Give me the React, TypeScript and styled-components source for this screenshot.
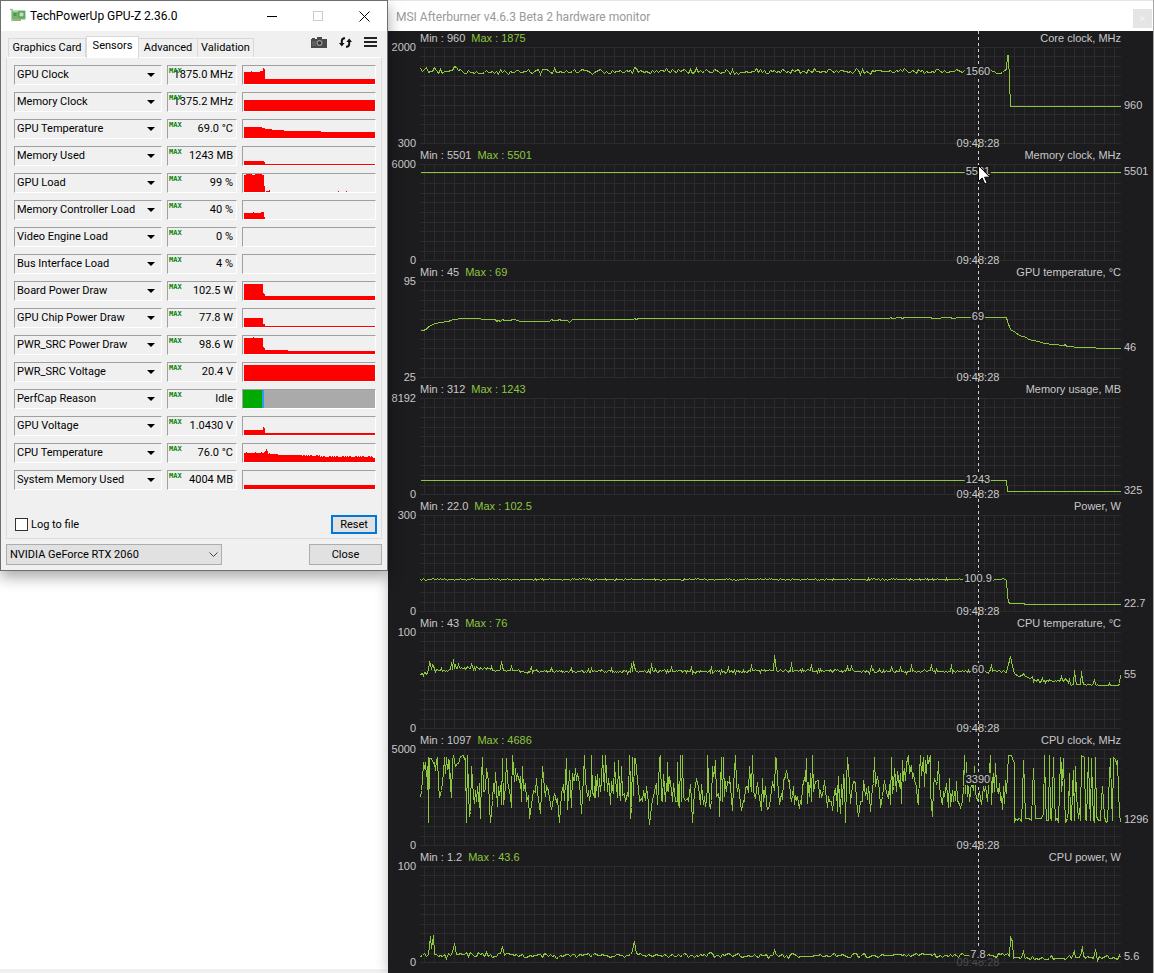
import React from 'react';
import styled, { createGlobalStyle } from 'styled-components';

const GlobalStyle = createGlobalStyle`
  * { box-sizing: border-box; }
  html, body { margin: 0; background: #fff; }
  body { font-family: 'Liberation Sans', Arial, sans-serif; font-size: 11px; line-height: 12px; color: #000; }
  button, select, input { font: inherit; color: inherit; margin: 0; }
`;

const Desktop = styled.div`
  display: flex;
  align-items: stretch;
  min-height: 100vh;
  background: #fff;
`;

const LeftColumn = styled.div`
  display: flex;
  flex: 0 0 388px;
  flex-direction: column;
  justify-content: space-between;
`;

const BottomStrip = styled.div`
  height: 4px;
  background: #f0f0f0;
`;

/* ---------- GPU-Z window ---------- */

const GpuzWindow = styled.section`
  position: relative;
  z-index: 2;
  border: 1px solid #6e6e6e;
  background: #f0f0f0;
  box-shadow: 0 6px 14px rgba(0, 0, 0, 0.35);
  font-family: Roboto, 'Liberation Sans', sans-serif;
`;

const TitleBar = styled.header`
  display: flex;
  align-items: center;
  height: 30px;
  padding: 0 0 0 9px;
  background: #fff;
`;

const WindowTitle = styled.h1<{ $muted?: boolean }>`
  flex: 1;
  margin: 0;
  font: 400 12px/16px Roboto, 'Open Sans', sans-serif;
  color: ${(p) => (p.$muted ? '#999' : '#000')};
`;

const CardIcon = styled.svg`
  width: 16px;
  height: 16px;
  margin-right: 4px;
`;

const CaptionButton = styled.button`
  display: flex;
  align-items: center;
  justify-content: center;
  width: 46px;
  height: 30px;
  padding: 0;
  border: 0;
  background: none;
`;

const TabBar = styled.div`
  display: flex;
  align-items: flex-end;
  height: 26px;
  padding: 0 10px 0 7px;
`;

const Tab = styled.button<{ $active?: boolean; $width: number }>`
  position: relative;
  width: ${(p) => p.$width}px;
  height: ${(p) => (p.$active ? 22 : 19)}px;
  margin-bottom: ${(p) => (p.$active ? -1 : 0)}px;
  padding: 0 0 ${(p) => (p.$active ? 3 : 0)}px;
  border: 1px solid #d9d9d9;
  border-bottom: 0;
  border-left-width: ${(p) => (p.$active ? 1 : 0)}px;
  background: ${(p) => (p.$active ? '#fff' : '#f0f0f0')};
  white-space: nowrap;
  &:first-child { border-left-width: 1px; }
`;

const Tools = styled.div`
  display: flex;
  flex: 1;
  align-items: center;
  justify-content: flex-end;
  gap: 12px;
  height: 26px;
  padding-bottom: 4px;
`;

const ToolButton = styled.button`
  display: flex;
  padding: 0;
  border: 0;
  background: none;
`;

const SensorPanel = styled.div`
  display: flex;
  flex-direction: column;
  height: 482px;
  margin: 0 5px;
  padding: 7px 4px 4px 7px;
  border: 1px solid #dcdcdc;
  border-top-color: #fff;
`;

const SensorList = styled.ul`
  display: grid;
  gap: 7px;
  margin: 0;
  padding: 0;
  list-style: none;
`;

const SensorRow = styled.li`
  display: grid;
  grid-template-columns: 148px 70px 134px;
  gap: 5px;
  height: 20px;
`;

const Sunken = styled.div`
  position: relative;
  border: 1px solid #fff;
  border-top-color: #a0a0a0;
  border-left-color: #a0a0a0;
`;

const SensorSelect = styled.select`
  appearance: none;
  width: 100%;
  height: 18px;
  padding: 0 0 0 2px;
  border: 0;
  background: none;
`;

const SelectArrow = styled.svg<{ $right: number }>`
  position: absolute;
  right: ${(p) => p.$right}px;
  top: 50%;
  transform: translateY(-50%);
  pointer-events: none;
`;

const Value = styled.output`
  display: block;
  padding-right: 3px;
  line-height: 18px;
  text-align: right;
`;

const MaxTag = styled.span`
  position: absolute;
  left: 1px;
  top: 2px;
  font: 700 7px/7px 'DejaVu Sans Mono', monospace;
  color: #008000;
`;

const History = styled.svg`
  display: block;
  width: 132px;
  height: 18px;
`;

const PanelFooter = styled.div`
  display: flex;
  align-items: center;
  justify-content: space-between;
  margin-top: auto;
`;

const CheckLabel = styled.label`
  display: flex;
  align-items: center;
  gap: 3px;
  padding-left: 1px;
`;

const Checkbox = styled.input`
  appearance: none;
  width: 13px;
  height: 13px;
  border: 1px solid #333;
  background: #fff;
`;

const PushButton = styled.button<{ $focus?: boolean; $width: number }>`
  width: ${(p) => p.$width}px;
  height: ${(p) => (p.$focus ? 19 : 21)}px;
  padding: 0;
  border: ${(p) => (p.$focus ? '2px solid #0078d7' : '1px solid #adadad')};
  background: #e1e1e1;
`;

const WindowFooter = styled.footer`
  display: flex;
  justify-content: space-between;
  padding: 5px;
`;

const CardPicker = styled.div`
  position: relative;
  width: 216px;
`;

const CardSelect = styled.select`
  appearance: none;
  width: 100%;
  height: 21px;
  padding: 0 0 0 3px;
  border: 1px solid #adadad;
  border-radius: 0;
  background: #e1e1e1;
`;

/* Each history is a list of [x, top] steps drawn down to the bottom of an 18px strip. */
type Step = [number, number];

const cpuTempSteps: Step[] = [];
for (let x = 1; x < 132; x++) {
  let top = 9;
  if (x > 24) top = 10;
  if (x > 34) top = 11;
  if (x > 58) top = 12;
  if (x > 76) top = 13;
  if (x === 3 || x === 12 || x === 18 || x === 21 || x === 26) top -= 1;
  if (x === 22 || x === 24) top = 7;
  if (x === 23) top = 5;
  if (x > 55 && (x * x * 7 + x) % 13 < 5) top -= 1;
  if (x === 130 || x === 131) top = 14;
  cpuTempSteps.push([x, top]);
}

interface Sensor {
  name: string;
  value: string;
  steps: Step[];
  perfCap?: boolean;
}

const sensors: Sensor[] = [
  { name: 'GPU Clock', value: '1875.0 MHz', steps: [[1, 6], [8, 5], [9, 6], [17, 5], [20, 2], [21, 3], [22, 13]] },
  { name: 'Memory Clock', value: '1375.2 MHz', steps: [[1, 7]] },
  { name: 'GPU Temperature', value: '69.0 °C', steps: [[1, 7], [19, 8], [22, 9], [29, 10], [41, 11], [78, 12]] },
  { name: 'Memory Used', value: '1243 MB', steps: [[1, 14], [21, 15], [22, 17]] },
  { name: 'GPU Load', value: '99 %', steps: [[1, 1], [3, 0], [9, 1], [12, 0], [19, 1], [21, 12], [22, 18], [23, 17], [26, 16], [27, 18], [95, 17], [96, 18], [103, 17], [104, 18]] },
  { name: 'Memory Controller Load', value: '40 %', steps: [[1, 12], [10, 11], [11, 12], [18, 11], [21, 16], [22, 18]] },
  { name: 'Video Engine Load', value: '0 %', steps: [] },
  { name: 'Bus Interface Load', value: '4 %', steps: [] },
  { name: 'Board Power Draw', value: '102.5 W', steps: [[1, 2], [20, 11], [21, 12], [22, 14]] },
  { name: 'GPU Chip Power Draw', value: '77.8 W', steps: [[1, 9], [20, 15], [22, 17]] },
  { name: 'PWR_SRC Power Draw', value: '98.6 W', steps: [[1, 2], [10, 1], [11, 2], [20, 11], [21, 12], [22, 14], [45, 15]] },
  { name: 'PWR_SRC Voltage', value: '20.4 V', steps: [[1, 2]] },
  { name: 'PerfCap Reason', value: 'Idle', steps: [], perfCap: true },
  { name: 'GPU Voltage', value: '1.0430 V', steps: [[1, 13], [20, 10], [21, 11], [22, 16]] },
  { name: 'CPU Temperature', value: '76.0 °C', steps: cpuTempSteps },
  { name: 'System Memory Used', value: '4004 MB', steps: [[1, 14]] },
];

const stepPath = (steps: Step[]) => {
  if (!steps.length) return '';
  return `M${steps[0][0]} 18` + steps.map(([x, y]) => `H${x}V${y}`).join('') + 'H132V18Z';
};

/* ---------- Hardware monitor ---------- */

const Monitor = styled.section`
  position: relative;
  z-index: 1;
  flex: 1;
  min-width: 0;
  border-right: 1px solid #a6a6a6;
  background: #1c1c1e;
  box-shadow: 0 0 12px rgba(0, 0, 0, 0.25);
`;

const MonitorTitle = styled.header`
  display: flex;
  align-items: center;
  height: 31px;
  padding: 1px 1px 0 8px;
  border-top: 1px solid #e6e6e6;
  background: #fff;
`;

const GhostClose = styled.button`
  display: flex;
  align-items: center;
  justify-content: center;
  width: 19px;
  height: 19px;
  margin-top: 3px;
  padding: 0;
  border: 0;
  background: #e5e5e5;
`;

const Charts = styled.div`
  position: relative;
  height: 942px;
  overflow: hidden;
  color: #c8c8c8;
`;

const ChartRow = styled.article`
  display: grid;
  grid-template-columns: 32px minmax(0, 1fr) 32px;
  height: 117px;
`;

const Scale = styled.div`
  display: flex;
  flex-direction: column;
  justify-content: space-between;
  height: 108px;
  margin-top: 10px;
  padding-right: 4px;
  text-align: right;
`;

const ChartBody = styled.div`
  padding-top: 1px;
`;

const ChartHeader = styled.div`
  display: flex;
  gap: 6px;
  height: 15px;
`;

const MaxText = styled.span`
  color: #8cc63f;
`;

const ChartTitle = styled.h2`
  margin: 0 0 0 auto;
  font: inherit;
`;

const Plot = styled.div`
  position: relative;
  height: 97px;
`;

const PlotSvg = styled.svg`
  display: block;
  width: 100%;
  height: 97px;
`;

const Current = styled.div<{ $y: number }>`
  padding: ${(p) => p.$y + 9}px 0 0 3px;
`;

const Readout = styled.span<{ $y: number }>`
  position: absolute;
  z-index: 2;
  left: 79.6%;
  top: ${(p) => p.$y - 7}px;
  padding: 0 1px;
  background: #1c1c1e;
  transform: translateX(-50%);
`;

const Stamp = styled.time<{ $dim?: boolean }>`
  position: absolute;
  z-index: 2;
  left: 79.6%;
  bottom: -5px;
  transform: translateX(-50%);
  color: ${(p) => (p.$dim ? '#4c4c4e' : 'inherit')};
`;

const CursorLine = styled.div`
  position: absolute;
  z-index: 1;
  top: 0;
  bottom: 26px;
  left: calc(32px + (100% - 64px) * 0.796);
  width: 1px;
  background: repeating-linear-gradient(#d0d0d0 0 3px, transparent 3px 6px);
`;

const Pointer = styled.svg`
  position: absolute;
  z-index: 3;
  top: 134px;
  left: calc(32px + (100% - 64px) * 0.796);
`;

type Point = [number, number];

/* Small repeatable ripple around a resting level. */
const ripple = (from: number, to: number, level: number, amp: number, seed: number, step = 1): Point[] => {
  const out: Point[] = [];
  let s = seed;
  for (let x = from; x < to; x += step) {
    s = (s * 1103515245 + 12345) % 2147483648;
    const r = s / 2147483648;
    out.push([x, level + Math.round((r + ((s >> 8) % 97) / 97 - 1) * amp)]);
  }
  return out;
};

/* Replaces the ripple with peaks where a burst of load was recorded. */
const withPeaks = (base: Point[], peaks: Point[]): Point[] => {
  const map = new Map<number, number>(base);
  peaks.forEach(([x, y]) => map.set(x, y));
  return [...map.entries()].sort((a, b) => a[0] - b[0]);
};

const pairs = (text: string, dx: number, dy: number): Point[] =>
  text.trim().split(/\s+/).map((p) => {
    const [x, y] = p.split(',').map(Number);
    return [Math.round((x + dx) / 3), Math.round((y + dy) / 3)];
  });

const coreClock: Point[] = [
  ...withPeaks(ripple(0, 585, 24, 3, 17, 2), [
    [0, 21], [4, 22], [6, 20], [14, 20], [34, 19], [36, 20], [88, 27], [120, 27], [134, 21],
    [172, 27], [214, 20], [216, 21], [246, 21], [276, 21], [310, 27], [318, 27], [336, 21], [394, 21], [440, 27], [450, 27], [484, 21],
  ]),
  [586, 22], [587, 8], [588, 8], [589, 34], [590, 59], [700, 59],
];

const gpuTemp: Point[] = [
  [0, 49], [3, 49], [7, 47], [8, 45], [11, 44], [14, 42], [21, 41], [27, 40], [31, 39], [32, 38], [43, 37], [60, 37], [61, 38], [75, 38],
  ...ripple(76, 94, 39, 2, 5, 2), [98, 39], [99, 40], [128, 40], ...ripple(129, 151, 39, 2, 9, 2),
  [152, 38], [213, 38], [214, 37], [216, 38], [218, 37], [469, 37], [470, 36], [472, 37], [480, 36], [482, 37], [484, 36],
  [510, 36], [512, 37], [530, 36], [532, 37], [540, 36], [586, 36],
  [587, 40], [590, 48], [595, 51], [599, 54], [606, 56], [608, 58], [618, 60], [624, 62], [633, 63], [643, 64], [645, 63], [646, 65], [660, 66], [665, 66], [686, 67], [700, 67],
];

const power: Point[] = [
  ...ripple(0, 586, 64, 1, 23, 1), [586, 65], [587, 80], [588, 86], [589, 88], [603, 88], [605, 89], [700, 89],
];

const cpuTemp: Point[] = withPeaks(
  [
    ...ripple(0, 8, 41, 2, 3), ...ripple(8, 30, 38, 2, 4), ...ripple(30, 72, 36, 2, 5), ...ripple(72, 100, 38, 1, 6),
    ...ripple(100, 240, 39, 2, 7), ...ripple(240, 330, 39, 2, 8), ...ripple(330, 430, 38, 2, 9), ...ripple(430, 587, 39, 2, 10),
    ...ripple(613, 650, 48, 3, 11), ...ripple(650, 678, 52, 1, 12), ...ripple(678, 699, 53, 0, 13),
  ],
  [
    [0, 43], [9, 30], [10, 32], [12, 32], [13, 33], [31, 30], [33, 27], [35, 33], [38, 32], [51, 32], [71, 34], [81, 29], [82, 34], [91, 33], [111, 34],
    [131, 35], [151, 36], [171, 36], [191, 36], [211, 31], [213, 29], [214, 34], [231, 31], [251, 34], [271, 34], [291, 34], [308, 34], [331, 32], [354, 23], [355, 30],
    [371, 30], [391, 32], [427, 34], [431, 34], [451, 33], [471, 34], [480, 34], [491, 32], [511, 32], [531, 32], [571, 32],
    [588, 32], [590, 24], [592, 34], [594, 41], [598, 44], [602, 43], [603, 41], [605, 44], [610, 46], [612, 44],
    [622, 46], [641, 44], [654, 38], [655, 46], [661, 39], [662, 48], [674, 47], [689, 51], [699, 51], [700, 43],
  ],
);

const cpuClock: Point[] = [
  ...pairs(`96,592 99,570 102,540 106,488 108,505 111,488 114,530 116,500 118,568 119,472 121,668 124,475 130,475 134,490 138,487 141,510 145,480 147,473 150,550 154,592 158,570 162,545 165,520 168,472 171,520 174,472 176,508 179,478 182,535 184,480 187,555 190,592 193,480 196,466 202,500 206,490 210,490 215,470 225,466 228,478 232,475 235,668 238,466 241,570 244,648 247,635 250,500 256,590 259,610 262,570 265,605 268,560 272,622 274,550 277,655 280,530 283,472 286,575 290,570 295,505 300,545 304,620 307,668 311,600 314,550 317,580 322,517 328,620 331,560 334,585 338,545 340,612 343,475 346,612 350,560 354,475 358,540 361,560 365,590 368,622 370,590 373,466 377,545 380,505 385,540 388,520 392,548 395,530 398,605 402,500 406,570 410,550 414,600 420,590 424,655 430,612 436,570 440,578 444,535 448,578 452,620 456,640 460,575 463,500 468,565 472,590 475,560 480,570 484,595 488,628 494,595 499,580 503,605 506,595 509,635 512,668 516,625 520,580 525,552 528,600 532,540 535,475 538,628 541,578 544,510 548,622 551,520 554,542 558,540 562,505 565,540 568,520 572,550 576,590 580,640 583,585 586,530 589,466 592,545 597,590 600,570 604,600 608,560 610,466 613,578 617,590 620,530 622,592 626,522 630,590 633,535 636,575 640,545 643,466 647,570 652,466 656,575 660,535 664,560 667,612 670,545 674,580 677,488 680,545 684,560 688,592 691,480 694,570 697,600 700,500 703,585 707,580 712,605 716,580 719,590 722,466 725,560 727,655 730,622 733,472 736,585 739,475 742,475 746,540 750,565 754,605 758,595 762,605 766,570 770,600 774,560 779,610`, -96, -448),
  ...pairs(`24,640 28,673 32,620 36,598 40,590 44,560 48,553 52,612 55,560 58,475 61,466 64,600 67,605 70,522 74,605 77,550 80,570 82,488 85,575 88,530 92,570 95,605 98,550 102,578 106,605 110,603 112,488 115,612 118,622 121,466 124,605 127,466 130,592 134,600 140,595 145,605 149,552 153,605 157,668 160,620 163,575 169,535 173,560 178,585 181,612 184,553 188,612 191,590 194,618 197,600 200,560 202,466 206,615 210,622 214,600 217,500 220,530 223,515 226,480 229,590 233,580 236,605 238,648 242,472 245,605 248,472 251,590 254,545 258,575 262,545 266,550 268,528 272,595 277,630 280,560 283,510 286,466 289,550 292,575 295,552 299,610 304,630 308,600 312,605 316,562 322,558 325,578 328,500 331,545 334,575 337,466 340,575 344,595 348,570 352,548 356,595 360,610 364,630 367,535 370,605 374,560 378,610 382,628 388,620 392,570 396,545 401,570 406,472 409,478 412,540 415,575 418,612 422,580 425,598 430,540 434,530 439,512 444,545 447,540 450,590 454,605 457,585 460,560 463,612 466,585 469,598 472,590 477,625 481,600 484,612 487,560 491,535 495,545 499,475 502,610 505,548 508,590 511,520 514,605 517,466 520,575 524,545 533,540 536,592 540,570 544,592 549,570 553,540 556,570 560,622 564,590 568,605 574,605 577,630 581,575 585,565 588,600 590,555 592,635 595,530 598,600 601,640 604,552 607,612 610,522 613,545 616,668 619,550 622,472 626,550 630,610 634,580 640,545 645,548 649,600 655,648 659,605 664,603 667,605 670,540 674,585 678,565 681,598 685,560 688,585 691,635 695,560 699,550 703,472 706,560 711,530 716,570 721,622 726,590 733,540 738,578 743,595 746,552 749,612 754,472 757,580 760,560 763,505 767,575 772,515 776,560 779,520`, 660, -448),
  ...pairs(`20,610 23,480 26,545 30,505 34,540 37,490 43,466 46,520 50,495 54,535 57,520 61,540 65,560 69,600 73,612 76,520 79,466 82,525 86,472 90,560 94,480 97,520 100,466 103,490 107,466 109,580 113,648 117,560 121,535 125,550 129,545 133,485 136,560 140,600 144,612 147,575 151,590 155,550 159,590 163,622 166,535 169,620 173,570 177,605 180,575 184,600 187,545 190,600 194,612 199,622 203,605 206,560 209,466 212,580 215,488 218,590 221,560 224,605 228,580 232,545 236,570 240,500 244,580 249,600 254,575 258,595 262,612 266,560 270,575 274,560 278,605 282,560 287,466 291,612 294,545 297,520 300,575 304,490 307,560 311,580 315,550 319,600 322,590 325,628 328,560 331,610 334,540 337,580 340,520 343,466 350,466 354,475 359,490 361,668 364,655 368,662 372,655 376,655 380,665 384,590 388,480 391,560 394,655 402,655 407,658 412,660 414,575 417,505 420,575 423,655 440,655 446,640 449,466 452,590 455,660 459,662 461,660 464,466 467,650 470,662 473,590 477,472 480,590 483,660 487,655 490,655 493,668 497,472 500,500 502,575 505,540 508,475 511,590 514,668 519,655 523,630 526,520 529,655 532,662 534,570 537,510 541,662 544,500 547,590 551,655 555,625 558,662 562,466 570,472 574,655 577,662 581,472 584,590 587,662 591,475 595,580 597,655 601,668 604,472 607,650 611,662 618,660 622,600 625,560 629,650 633,660 636,668 640,665 644,530 648,475 651,590 653,662 656,472 662,478 667,490 670,480 673,570 675,640 677,668`, 1422, -448),
];

const cpuPower: Point[] = withPeaks(
  [...ripple(0, 586, 89, 3, 31, 2), ...ripple(594, 625, 92, 2, 32, 2), ...ripple(625, 700, 91, 3, 33, 2)],
  [
    [8, 88], [10, 70], [11, 82], [12, 76], [13, 69], [14, 88], [32, 86], [34, 77], [36, 88], [80, 87], [82, 80], [84, 89], [212, 85], [213, 78], [214, 75], [216, 87],
    [353, 88], [354, 83], [355, 87], [587, 87], [589, 90], [590, 71], [592, 75], [593, 92], [602, 89], [603, 84], [605, 92],
    [653, 87], [654, 85], [661, 86], [662, 80], [664, 90], [675, 83], [677, 94], [700, 91],
  ],
);

interface Chart {
  title: string;
  top: string;
  bottom: string;
  min: string;
  max: string;
  value: string;
  valueY: number;
  current: string;
  currentY: number;
  points: Point[];
}

const charts: Chart[] = [
  { title: 'Core clock, MHz', top: '2000', bottom: '300', min: '960', max: '1875', value: '1560', valueY: 25, current: '960', currentY: 59, points: coreClock },
  { title: 'Memory clock, MHz', top: '6000', bottom: '0', min: '5501', max: '5501', value: '5501', valueY: 8, current: '5501', currentY: 8, points: [[0, 8], [700, 8]] },
  { title: 'GPU temperature, °C', top: '95', bottom: '25', min: '45', max: '69', value: '69', valueY: 36, current: '46', currentY: 67, points: gpuTemp },
  { title: 'Memory usage, MB', top: '8192', bottom: '0', min: '312', max: '1243', value: '1243', valueY: 82, current: '325', currentY: 93, points: [[0, 82], [586, 82], [587, 93], [700, 93]] },
  { title: 'Power, W', top: '300', bottom: '0', min: '22.0', max: '102.5', value: '100.9', valueY: 64, current: '22.7', currentY: 89, points: power },
  { title: 'CPU temperature, °C', top: '100', bottom: '0', min: '43', max: '76', value: '60', valueY: 38, current: '55', currentY: 43, points: cpuTemp },
  { title: 'CPU clock, MHz', top: '5000', bottom: '0', min: '1097', max: '4686', value: '3390', valueY: 31, current: '1296', currentY: 71, points: cpuClock },
  { title: 'CPU power, W', top: '100', bottom: '0', min: '1.2', max: '43.6', value: '7.8', valueY: 89, current: '5.6', currentY: 91, points: cpuPower },
];

const gridPath =
  [0, 9, 19, 29, 38, 48, 58, 67, 77, 87, 96].map((y) => `M0 ${y + 0.5}H701`).join('') +
  Array.from({ length: 70 }, (_, i) => `M${i * 10 + 4.5} 0V97`).join('');

const line = (points: Point[]) => points.map(([x, y]) => `${x + 0.5},${y + 0.5}`).join(' ');

const ChartView = ({ chart, last }: { chart: Chart; last: boolean }) => (
  <ChartRow>
    <Scale>
      <span>{chart.top}</span>
      <span>{chart.bottom}</span>
    </Scale>
    <ChartBody>
      <ChartHeader>
        <span>Min : {chart.min}</span>
        <MaxText>Max : {chart.max}</MaxText>
        <ChartTitle>{chart.title}</ChartTitle>
      </ChartHeader>
      <Plot>
        <PlotSvg viewBox="0 0 701 97" preserveAspectRatio="none" shapeRendering="crispEdges" fill="none">
          <path d={gridPath} stroke="#2b2b2e" />
          <polyline points={line(chart.points)} stroke="#8cc63f" />
        </PlotSvg>
        <Stamp $dim={last}>09:48:28</Stamp>
        <Readout $y={chart.valueY}>{chart.value}</Readout>
      </Plot>
    </ChartBody>
    <Current $y={chart.currentY}>{chart.current}</Current>
  </ChartRow>
);

export default function App() {
  return (
    <>
      <GlobalStyle />
      <Desktop>
        <LeftColumn>
          <GpuzWindow>
            <TitleBar>
              <CardIcon viewBox="0 0 16 16" aria-hidden="true">
                <path d="M0 1.5h2v12" fill="none" stroke="#a9b3a6" strokeWidth="1.4" />
                <path d="M2 2.5h13.500v9H2z" fill="#6fb868" />
                <path d="M3 11h8v2H3z" fill="#a5ab7c" />
                <rect x="9" y="4" width="5" height="5" fill="#c4dcc0" stroke="#4f8f52" />
                <path d="M3.500 5h3v3h-3z" fill="#4a9650" />
                <path d="M3 3.500h5" stroke="#a6dc9c" />
              </CardIcon>
              <WindowTitle>TechPowerUp GPU-Z 2.36.0</WindowTitle>
              <CaptionButton aria-label="Minimize">
                <svg width="10" height="10"><path d="M0 5.500h10" stroke="#000" /></svg>
              </CaptionButton>
              <CaptionButton aria-label="Maximize" disabled>
                <svg width="10" height="10"><rect x=".5" y=".5" width="9" height="9" fill="none" stroke="#ccc" /></svg>
              </CaptionButton>
              <CaptionButton aria-label="Close window">
                <svg width="11" height="11"><path d="M.5 .5l10 10M10.500 .5l-10 10" stroke="#000" /></svg>
              </CaptionButton>
            </TitleBar>
            <TabBar>
              <Tab $width={78}>Graphics Card</Tab>
              <Tab $width={53} $active>Sensors</Tab>
              <Tab $width={59}>Advanced</Tab>
              <Tab $width={56}>Validation</Tab>
              <Tools>
                <ToolButton aria-label="Screenshot">
                  <svg width="16" height="11" viewBox="0 0 16 11">
                    <path d="M0 2h1V1h3v1h2V0h5v2h5v9H0z" fill="#4a4a4a" />
                    <circle cx="8.500" cy="6" r="3" fill="#999" />
                    <circle cx="8.500" cy="6" r="1.800" fill="#333" />
                    <path d="M2 4v5M4 4v5" stroke="#777" />
                  </svg>
                </ToolButton>
                <ToolButton aria-label="Refresh">
                  <svg width="13" height="11" viewBox="0 0 13 11">
                    <path d="M6 1.200H5A3 3 0 0 0 2.800 4v3M7 9.800h1A3 3 0 0 0 10.200 7V4" fill="none" stroke="#111" strokeWidth="2" />
                    <path d="M0 6h5.600L2.800 9.500zM13 5H7.400l2.800-3.500z" fill="#111" />
                  </svg>
                </ToolButton>
                <ToolButton aria-label="Menu">
                  <svg width="13" height="10"><path d="M0 1h13M0 5h13M0 9h13" stroke="#222" strokeWidth="2" /></svg>
                </ToolButton>
              </Tools>
            </TabBar>
            <SensorPanel>
              <SensorList>
                {sensors.map((s) => (
                  <SensorRow key={s.name}>
                    <Sunken>
                      <SensorSelect aria-label={s.name} defaultValue={s.name}>
                        <option>{s.name}</option>
                      </SensorSelect>
                      <SelectArrow $right={6} width="8" height="4"><path d="M0 0h8L4 4z" fill="#000" /></SelectArrow>
                    </Sunken>
                    <Sunken>
                      <MaxTag>MAX</MaxTag>
                      <Value>{s.value}</Value>
                    </Sunken>
                    <Sunken>
                      <History viewBox="0 0 132 18" shapeRendering="crispEdges">
                        {s.perfCap ? (
                          <>
                            <rect width="132" height="18" fill="#aaa" />
                            <rect width="19" height="18" fill="#00aa00" />
                            <rect x="19" width="2" height="18" fill="#2d9bf0" />
                          </>
                        ) : (
                          <path d={stepPath(s.steps)} fill="#f00" />
                        )}
                      </History>
                    </Sunken>
                  </SensorRow>
                ))}
              </SensorList>
              <PanelFooter>
                <CheckLabel>
                  <Checkbox type="checkbox" />
                  Log to file
                </CheckLabel>
                <PushButton $focus $width={46}>Reset</PushButton>
              </PanelFooter>
            </SensorPanel>
            <WindowFooter>
              <CardPicker>
                <CardSelect aria-label="Graphics card" defaultValue="NVIDIA GeForce RTX 2060">
                  <option>NVIDIA GeForce RTX 2060</option>
                </CardSelect>
                <SelectArrow $right={4} width="9" height="6"><path d="M.5 .5l4 4 4-4" fill="none" stroke="#444" /></SelectArrow>
              </CardPicker>
              <PushButton $width={73}>Close</PushButton>
            </WindowFooter>
          </GpuzWindow>
          <BottomStrip />
        </LeftColumn>

        <Monitor>
          <MonitorTitle>
            <WindowTitle $muted>MSI Afterburner v4.6.3 Beta 2 hardware monitor</WindowTitle>
            <GhostClose aria-label="Close monitor">
              <svg width="5" height="5"><path d="M.5 .5l4 4M4.500 .5l-4 4" stroke="#fafafa" /></svg>
            </GhostClose>
          </MonitorTitle>
          <Charts>
            {charts.map((c, i) => (
              <ChartView key={c.title} chart={c} last={i === charts.length - 1} />
            ))}
            <CursorLine />
            <Pointer width="13" height="20" viewBox="0 0 13 20">
              <path d="M.5 .5v16l3.700-3.500 2.600 6 2.400-1-2.600-5.800H12z" fill="#fff" stroke="#000" />
            </Pointer>
          </Charts>
        </Monitor>
      </Desktop>
    </>
  );
}
